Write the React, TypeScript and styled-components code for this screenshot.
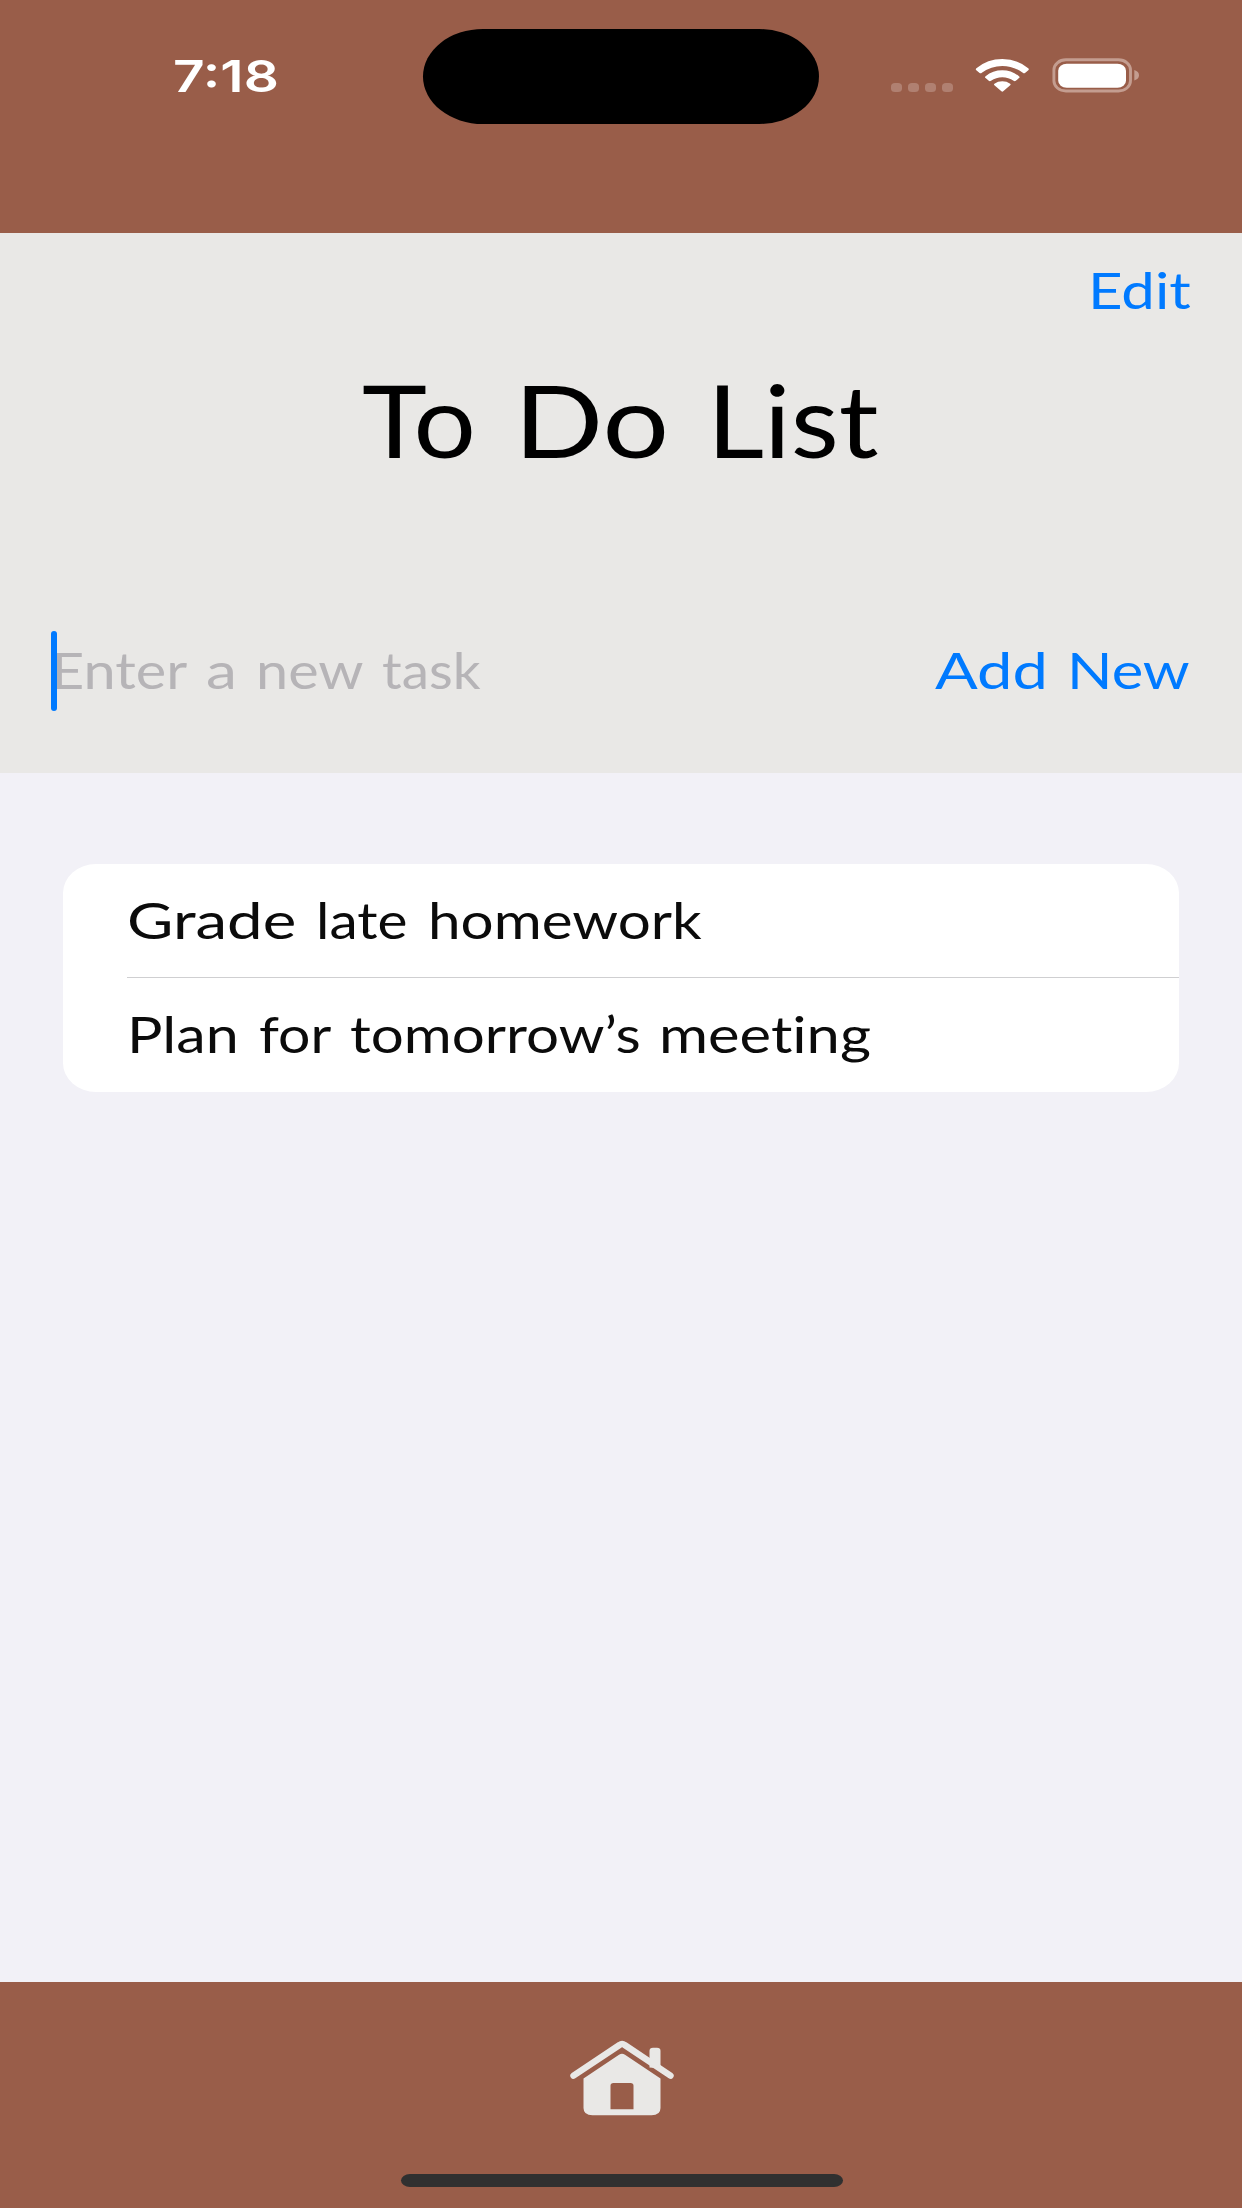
import React from "react";
import styled, { createGlobalStyle } from "styled-components";

const BROWN = "#995d49";
const STONE = "#e9e8e6";
const BLUE = "#007aff";
const CANVAS = "#f2f1f7";

const GlobalStyle = createGlobalStyle`
  *, *::before, *::after { box-sizing: border-box; }
  body { margin: 0; background: ${CANVAS}; font-family: Lato, "Liberation Sans", sans-serif; }
`;

const Screen = styled.main`
  width: 1242px;
  height: 2208px;
  display: flex;
  flex-direction: column;
  overflow: hidden;
`;

const StatusBar = styled.header`
  height: 233px;
  flex: none;
  display: grid;
  grid-template-columns: 423px 396px 1fr;
  align-items: start;
  background: ${BROWN};
`;

const Clock = styled.time`
  display: block;
  width: 120px;
  margin: 49px 0 0 173px;
  font: 600 44px/54px Inter, sans-serif;
  color: #fff;
  white-space: nowrap;
  transform: scaleX(1.25);
  transform-origin: left;
`;

const Island = styled.div`
  height: 95px;
  margin-top: 29px;
  border-radius: 60px / 47.5px;
  background: #000;
`;

const Indicators = styled.div`
  display: flex;
  padding: 58px 0 0 72px;
`;

const Signal = styled.div`
  display: flex;
  gap: 6px;
  padding-top: 24.8px;
`;

const Dot = styled.i`
  width: 11px;
  height: 9px;
  border-radius: 4px / 3.5px;
  background: #b08071;
`;

const Wifi = styled.svg`
  width: 54px;
  height: 34px;
  margin-left: 22px;
`;

const Battery = styled.svg`
  width: 90px;
  height: 36px;
  margin-left: 22px;
`;

const Composer = styled.section`
  height: 540px;
  flex: none;
  display: flex;
  flex-direction: column;
  background: ${STONE};
`;

const Toolbar = styled.div`
  display: flex;
  justify-content: flex-end;
  padding-top: 26px;
`;

const Phrase = styled.span<{ size?: number }>`
  display: flex;
  font-size: ${(p) => p.size ?? 51}px;
  line-height: ${(p) => (p.size ? 121 : 61)}px;
  font-variant-ligatures: none;
`;

const Word = styled.span<{ advance: number; stretch: number }>`
  flex: none;
  width: ${(p) => p.advance}px;
  white-space: nowrap;
  transform: scaleX(${(p) => p.stretch});
  transform-origin: left;
`;

const TextButton = styled.button`
  padding: 0;
  border: 0;
  background: none;
  font-family: inherit;
  color: ${BLUE};
  text-align: left;
`;

const Title = styled.h1`
  display: flex;
  margin: 39px 0 0 362px;
  font-weight: 400;
  color: #000;
`;

const EntryRow = styled.div`
  display: flex;
  justify-content: space-between;
  align-items: flex-start;
  height: 80px;
  margin-top: 151px;
  padding-left: 51px;
`;

const Field = styled.div`
  display: flex;
  align-items: flex-start;
  color: #b6b4b7;
`;

const FieldText = styled.div`
  padding-top: 8px;
`;

const AddButton = styled(TextButton)`
  padding-top: 8px;
`;

const Caret = styled.i`
  width: 6px;
  height: 80px;
  margin-right: -6px;
  border-radius: 3px;
  background: ${BLUE};
  z-index: 1;
`;

const ListArea = styled.section`
  flex: 1;
  padding: 91px 63px 0;
  background: ${CANVAS};
`;

const Card = styled.ul`
  height: 228px;
  margin: 0;
  padding: 0 0 0 64px;
  list-style: none;
  border-radius: 33px / 29px;
  background: #fff;
  color: #0b0b0b;
`;

const Task = styled.li`
  height: 113px;
  padding-top: 25px;
  & + & {
    border-top: 1px solid #cfcfd1;
  }
`;

const TabBar = styled.footer`
  height: 226px;
  flex: none;
  display: flex;
  flex-direction: column;
  align-items: center;
  background: ${BROWN};
`;

const HomeIcon = styled.svg`
  width: 106px;
  height: 76px;
  margin: 57.5px 0 0 1px;
`;

const HomeIndicator = styled.div`
  width: 442px;
  height: 13px;
  margin: 58.5px 0 0 1px;
  border-radius: 9px / 6.5px;
  background: #303030;
`;

type WordSpec = [text: string, advance: number, stretch: number];

function Words({ words, size }: { words: WordSpec[]; size?: number }) {
  return (
    <Phrase size={size}>
      {words.map(([text, advance, stretch], i) => (
        <Word key={i} advance={advance} stretch={stretch}>
          {text}
        </Word>
      ))}
    </Phrase>
  );
}

const tasks: WordSpec[][] = [
  [["Grade", 188.5, 1.246], ["late", 112, 1.112], ["homework", 300, 1.145]],
  [["Plan", 132, 1.16], ["for", 91, 1.12], ["tomorrow’s", 309, 1.143], ["meeting", 230, 1.17]],
];

export default function App() {
  return (
    <Screen>
      <GlobalStyle />
      <StatusBar>
        <Clock>7:18</Clock>
        <Island />
        <Indicators>
          <Signal>
            <Dot /><Dot /><Dot /><Dot />
          </Signal>
          <Wifi viewBox="975 58 54 34" fill="#fff">
            <path d="M976.4 68.2Q987.5 59 1002.3 59T1028.2 68.2Q1029.4 69.2 1028.3 70.2L1025 72.9Q1024 73.8 1022.8 72.8Q1013.5 66 1002.3 66T981.8 72.8Q980.6 73.8 979.6 72.9L976.3 70.2Q975.2 69.2 976.4 68.2Z" />
            <path d="M985.6 76.2Q992.8 70.3 1002.3 70.3T1019 76.2Q1020.2 77.1 1019 78.1L1015.8 80.8Q1014.8 81.6 1013.6 80.8Q1008.6 77.3 1002.3 77.3T991 80.8Q989.8 81.6 988.8 80.8L985.6 78.1Q984.4 77.1 985.6 76.2Z" />
            <path d="M994.4 83.7Q997.8 81.3 1002.3 81.3T1010.2 83.7Q1011.2 84.4 1010.2 85.3L1003.2 91.3Q1002.3 92 1001.4 91.3L994.4 85.3Q993.4 84.4 994.4 83.7Z" />
          </Wifi>
          <Battery viewBox="1051 58 90 36">
            <rect x="1053.9" y="59.8" width="76.6" height="31.2" rx="12" ry="10.2" fill="none" stroke="#c49d90" strokeWidth="2.9" />
            <rect x="1058.2" y="63.7" width="67.8" height="24" rx="8.5" ry="7" fill="#fff" />
            <path d="M1134.3 70Q1139 71.5 1139 75.2T1134.3 80.5Z" fill="#c49d90" />
          </Battery>
        </Indicators>
      </StatusBar>

      <Composer>
        <Toolbar>
          <TextButton>
            <Words words={[["Edit", 153.7, 1.175]]} />
          </TextButton>
        </Toolbar>
        <Title>
          <Words size={101} words={[["To", 152, 1.09], ["Do", 193.4, 1.162], ["List", 200, 1.1]]} />
        </Title>
        <EntryRow>
          <Field>
            <Caret />
            <FieldText>
              <Words words={[["Enter", 155, 1.13], ["a", 50, 1.22], ["new", 126, 1.13], ["task", 110, 1.075]]} />
            </FieldText>
          </Field>
          <AddButton>
            <Words words={[["Add", 132.3, 1.24], ["New", 174.7, 1.17]]} />
          </AddButton>
        </EntryRow>
      </Composer>

      <ListArea>
        <Card>
          {tasks.map((words, i) => (
            <Task key={i}>
              <Words words={words} />
            </Task>
          ))}
        </Card>
      </ListArea>

      <TabBar>
        <HomeIcon viewBox="568.5 2039.5 106 76">
          <path d="M649 2067V2050.5Q649 2047.3 652.5 2047.3H656.5Q660 2047.3 660 2050.5V2068Z" fill={STONE} />
          <path d="M573 2075.2L619 2044.5Q621.6 2042.5 624.2 2044.5L670 2075.2" fill="none" stroke={STONE} strokeWidth="6.4" strokeLinecap="round" strokeLinejoin="round" />
          <path fillRule="evenodd" d="M583 2078L618.5 2054.3Q621.5 2052.3 624.5 2054.3L660 2078V2107.5Q660 2114.8 651 2114.8H592Q583 2114.8 583 2107.5ZM613 2082.6Q610 2082.6 610 2085.2V2108.7H633V2085.2Q633 2082.6 630 2082.6Z" fill={STONE} />
        </HomeIcon>
        <HomeIndicator />
      </TabBar>
    </Screen>
  );
}
